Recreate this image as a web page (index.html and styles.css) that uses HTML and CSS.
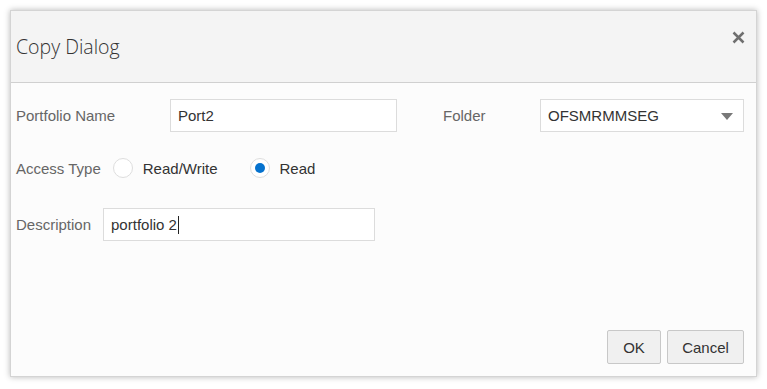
FILE: index.html
```html
<!DOCTYPE html>
<html>
<head>
<meta charset="utf-8">
<link rel="stylesheet" href="styles.css">
</head>
<body>
<div class="dialog">
  <div class="header">
    <span class="title">Copy Dialog</span>
    <span class="close">
      <svg width="13" height="13" viewBox="0 0 13 13"><path d="M1.5 1.5 L11.5 11.5 M11.5 1.5 L1.5 11.5" stroke="#6f6f6f" stroke-width="2.5" stroke-linecap="butt"/></svg>
    </span>
  </div>
  <div class="body">
    <div class="row row-name">
      <span class="label">Portfolio Name</span>
      <div class="field name-field">Port2</div>
      <span class="label folder-label">Folder</span>
      <div class="field select">
        <span>OFSMRMMSEG</span>
        <svg class="arrow" width="12" height="7" viewBox="0 0 12 7"><path d="M0 0 H12 L6 7 Z" fill="#787878"/></svg>
      </div>
    </div>
    <div class="row row-access">
      <span class="label">Access Type</span>
      <span class="radio"></span>
      <span class="radio-text">Read/Write</span>
      <span class="radio checked"></span>
      <span class="radio-text">Read</span>
    </div>
    <div class="row row-desc">
      <span class="label">Description</span>
      <div class="field desc-field">portfolio 2<span class="caret"></span></div>
    </div>
  </div>
  <div class="footer">
    <button class="btn ok">OK</button>
    <button class="btn cancel">Cancel</button>
  </div>
</div>
</body>
</html>
```
FILE: styles.css
```css
html, body {
  margin: 0;
  padding: 0;
  background: #ffffff;
}
body {
  padding: 10px;
  font-family: "Liberation Sans", Arial, sans-serif;
  font-size: 15px;
}
.dialog {
  width: 747px;
  height: 367px;
  box-sizing: border-box;
  background: #fcfcfc;
  border: 1px solid #d4d4d4;
  box-shadow: 0 0 6px rgba(0, 0, 0, 0.28);
  display: flex;
  flex-direction: column;
}
.header {
  height: 72px;
  box-sizing: border-box;
  background: #f4f4f4;
  border-bottom: 1px solid #d0d0d0;
  display: flex;
  align-items: center;
  justify-content: space-between;
  padding: 0 11px 0 5px;
}
.title {
  font-family: "Open Sans", sans-serif;
  font-weight: 300;
  font-size: 19.5px;
  color: #333;
  margin-top: -1px;
}
.close {
  display: flex;
  margin-top: -19px;
}
.body {
  flex: 1;
  padding: 16px 0 0 5px;
}
.row {
  display: flex;
  align-items: center;
}
.label {
  color: #666;
}
.field {
  box-sizing: border-box;
  height: 33px;
  border: 1px solid #dcdcdc;
  background: #fff;
  color: #333;
  display: flex;
  align-items: center;
  padding-left: 7px;
}
.row-name .label:first-child {
  width: 154px;
}
.name-field {
  width: 227px;
}
.folder-label {
  margin-left: 46px;
  width: 97px;
}
.select {
  width: 204px;
  justify-content: space-between;
  padding-right: 10px;
}
.arrow {
  margin-top: 1px;
}
.row-access {
  margin-top: 21px;
  height: 30px;
}
.radio {
  box-sizing: border-box;
  width: 20px;
  height: 20px;
  border-radius: 50%;
  border: 1px solid #dedede;
  background: #fff;
  margin-left: 12px;
  margin-right: 10px;
  display: flex;
  align-items: center;
  justify-content: center;
}
.radio.checked {
  margin-left: 32px;
}
.radio.checked::after {
  content: "";
  width: 10px;
  height: 10px;
  border-radius: 50%;
  background: #0572ce;
}
.radio-text {
  color: #333;
}
.row-desc {
  margin-top: 25px;
}
.desc-field {
  margin-left: 12px;
  width: 272px;
}
.caret {
  display: inline-block;
  width: 1px;
  height: 18px;
  background: #222;
  margin-left: 1px;
}
.footer {
  display: flex;
  justify-content: flex-end;
  gap: 6px;
  padding: 0 12px 12px 0;
}
.btn {
  height: 34px;
  box-sizing: border-box;
  border: 1px solid #c8c8c8;
  border-radius: 2px;
  background: #f0f0f0;
  color: #333;
  font-family: "Liberation Sans", Arial, sans-serif;
  font-size: 15px;
  padding: 0;
}
.ok {
  width: 54px;
}
.cancel {
  width: 77px;
}
```
